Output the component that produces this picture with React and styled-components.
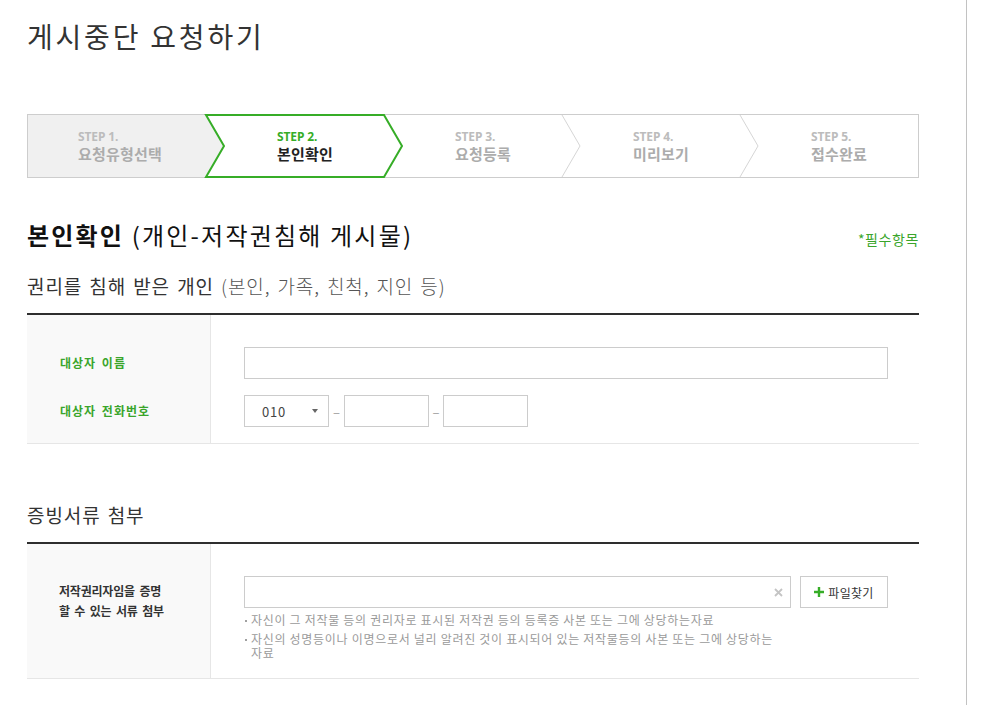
import React from "react";
import styled, { createGlobalStyle } from "styled-components";

const GREEN = "#36ad27";
const GREEN_TEXT = "#3aa52b";

const GlobalStyle = createGlobalStyle`
  html, body { margin: 0; padding: 0; background: #fff; }
  body {
    font-family: "Noto Sans CJK KR", "Noto Sans", sans-serif;
    color: #333;
    word-break: keep-all;
  }
  * { box-sizing: border-box; }
`;

const Page = styled.div`
  display: flex;
  min-height: 705px;
`;

const Main = styled.main`
  width: 967px;
  flex-shrink: 0;
  border-right: 1px solid #c2c2c2;
  padding: 19px 0 0 27px;
  min-height: 705px;
`;

const Side = styled.div`
  flex: 1;
  background: #fff;
`;

const Title = styled.h1`
  margin: 0;
  font-size: 28px;
  line-height: 34px;
  font-weight: 400;
  color: #333;
  letter-spacing: 2.8px;
`;

/* ---------- stepper ---------- */
const Stepper = styled.ol`
  display: flex;
  width: 892px;
  height: 64px;
  margin: 61px 0 0;
  padding: 0;
  list-style: none;
  border: 1px solid #cdcdcd;
  background: #fff;
`;

const Step = styled.li`
  position: relative;
  width: 178px;
  flex: ${(p) => (p.$last ? "1" : "none")};
  display: flex;
  flex-direction: column;
  justify-content: center;
  padding-left: ${(p) => p.$pl}px;
  padding-top: 1px;
`;

const Shape = styled.svg`
  position: absolute;
  left: 0;
  top: -1px;
  width: 198px;
  height: 64px;
  overflow: visible;
  pointer-events: none;
  z-index: 0;
`;

const StepNo = styled.span`
  position: relative;
  z-index: 1;
  font-family: "Noto Sans", "Liberation Sans", sans-serif;
  font-size: 12px;
  line-height: 15px;
  font-weight: 700;
  letter-spacing: -0.1px;
  color: ${(p) => (p.$active ? GREEN : "#bcbcbc")};
`;

const StepName = styled.span`
  position: relative;
  z-index: 1;
  font-size: 15px;
  line-height: 20px;
  font-weight: 700;
  letter-spacing: 0.2px;
  color: ${(p) => (p.$active ? "#222" : "#acacac")};
`;

const steps = [
  { no: "STEP 1.", name: "요청유형선택", state: "done" },
  { no: "STEP 2.", name: "본인확인", state: "active" },
  { no: "STEP 3.", name: "요청등록", state: "todo" },
  { no: "STEP 4.", name: "미리보기", state: "todo" },
  { no: "STEP 5.", name: "접수완료", state: "todo" },
];

function StepShape({ state, last }) {
  if (state === "done") {
    return (
      <Shape>
        <polygon points="0,1 178,1 196,32 178,63 0,63" fill="#f0f0f0" />
      </Shape>
    );
  }
  if (state === "active") {
    return (
      <Shape>
        <polygon
          points="0,1 178,1 196,32 178,63 0,63 18,32"
          fill="#fff"
          stroke={GREEN}
          strokeWidth="2"
          strokeLinejoin="miter"
        />
      </Shape>
    );
  }
  if (last) return null;
  return (
    <Shape>
      <polyline points="178,1 196,32 178,63" fill="none" stroke="#d6d6d6" strokeWidth="1" />
    </Shape>
  );
}

/* ---------- headings ---------- */
const HeadRow = styled.div`
  display: flex;
  justify-content: space-between;
  align-items: baseline;
  width: 892px;
  margin-top: 42px;
`;

const H2 = styled.h2`
  margin: 0;
  font-size: 24px;
  line-height: 30px;
  font-weight: 400;
  color: #111;
  letter-spacing: 2.2px;
`;

const Strong = styled.strong`
  font-weight: 700;
`;

const Required = styled.span`
  font-size: 14px;
  letter-spacing: 0.6px;
  color: ${GREEN_TEXT};
`;

const H3 = styled.h3`
  margin: ${(p) => p.$mt}px 0 15px;
  font-size: 19px;
  line-height: 24px;
  font-weight: 400;
  color: #333;
  letter-spacing: 0.9px;
  word-spacing: 2px;
`;

const Sub = styled.span`
  color: #555;
  font-weight: 300;
`;

/* ---------- form table ---------- */
const Table = styled.div`
  width: 892px;
  border-top: 2px solid #2e2e2e;
  border-bottom: 1px solid #e6e6e6;
`;

const Row = styled.div`
  display: grid;
  grid-template-columns: 184px 1fr;
`;

const LabelCell = styled.div`
  display: flex;
  align-items: center;
  background: #f9f9f9;
  border-right: 1px solid #e6e6e6;
  padding: ${(p) => p.$pt || 0}px 0 ${(p) => p.$pb || 0}px ${(p) => p.$pl || 33}px;
  font-size: 12px;
  line-height: 20px;
  font-weight: 700;
  letter-spacing: ${(p) => (p.$green ? "1px" : "-0.2px")};
  word-spacing: 2px;
  color: ${(p) => (p.$green ? GREEN_TEXT : "#333")};
`;

const FieldCell = styled.div`
  display: flex;
  flex-direction: ${(p) => (p.$column ? "column" : "row")};
  align-items: ${(p) => (p.$column ? "stretch" : "center")};
  padding: ${(p) => p.$pt}px 31px ${(p) => p.$pb}px 33px;
`;

const TextInput = styled.input`
  display: block;
  height: 32px;
  width: ${(p) => (p.$w ? `${p.$w}px` : "100%")};
  margin: 0;
  padding: 0 10px;
  border: 1px solid #cccccc;
  border-radius: 0;
  background: #fff;
  font: inherit;
  font-size: 13px;
  color: #333;
  outline: none;
`;

const SelectBox = styled.div`
  display: flex;
  align-items: center;
  justify-content: space-between;
  width: 85px;
  height: 32px;
  padding: 0 10px 0 17px;
  border: 1px solid #cccccc;
  font-size: 13px;
  color: #444;
  letter-spacing: 0.8px;
`;

const Caret = styled.span`
  width: 0;
  height: 0;
  border-left: 3px solid transparent;
  border-right: 3px solid transparent;
  border-top: 4px solid #666;
`;

const Dash = styled.span`
  width: ${(p) => p.$w || 15}px;
  text-align: center;
  font-size: 13px;
  color: #a0a0a0;
`;

const FileRow = styled.div`
  display: flex;
  gap: 9px;
`;

const FileBox = styled.div`
  display: flex;
  align-items: center;
  justify-content: flex-end;
  width: 547px;
  height: 32px;
  padding-right: 7px;
  border: 1px solid #cccccc;
`;

const FileButton = styled.button`
  display: flex;
  align-items: center;
  justify-content: center;
  gap: 4px;
  width: 88px;
  height: 32px;
  margin: 0;
  padding: 0;
  border: 1px solid #cccccc;
  background: #fff;
  font-family: inherit;
  font-size: 12px;
  letter-spacing: 0.3px;
  color: #333;
  cursor: pointer;
`;

const NoteList = styled.ul`
  width: 547px;
  margin: 5px 0 0;
  padding: 0;
  list-style: none;
`;

const Note = styled.li`
  display: flex;
  align-items: flex-start;
  margin-top: ${(p) => (p.$first ? 0 : 5)}px;
  font-size: 12px;
  line-height: 14px;
  color: #9a9a9a;
  letter-spacing: 0.7px;
  word-break: keep-all;
`;

const Bullet = styled.span`
  flex-shrink: 0;
  width: 2px;
  height: 2px;
  margin: 7px 4px 0 1px;
  background: #a0a0a0;
`;

const ClearIcon = () => (
  <svg width="9" height="9" viewBox="0 0 9 9" aria-hidden="true">
    <path d="M1 1 L8 8 M8 1 L1 8" stroke="#c4c4c4" strokeWidth="1.8" />
  </svg>
);

const PlusIcon = () => (
  <svg width="10" height="10" viewBox="0 0 10 10" aria-hidden="true">
    <path d="M5 0 V10 M0 5 H10" stroke={GREEN} strokeWidth="2.4" />
  </svg>
);

export default function App() {
  return (
    <>
      <GlobalStyle />
      <Page>
        <Main>
          <Title>게시중단 요청하기</Title>

          <Stepper>
            {steps.map((s, i) => (
              <Step key={s.no} $pl={i === 0 ? 50 : 71} $last={i === steps.length - 1}>
                <StepShape state={s.state} last={i === steps.length - 1} />
                <StepNo $active={s.state === "active"}>{s.no}</StepNo>
                <StepName $active={s.state === "active"}>{s.name}</StepName>
              </Step>
            ))}
          </Stepper>

          <HeadRow>
            <H2>
              <Strong>본인확인</Strong> (개인-저작권침해 게시물)
            </H2>
            <Required>*필수항목</Required>
          </HeadRow>

          <H3 $mt={24}>
            권리를 침해 받은 개인 <Sub>(본인, 가족, 친척, 지인 등)</Sub>
          </H3>

          <Table>
            <Row>
              <LabelCell $green $pt={32} $pb={8}>대상자 이름</LabelCell>
              <FieldCell $pt={32} $pb={8}>
                <TextInput type="text" aria-label="대상자 이름" />
              </FieldCell>
            </Row>
            <Row>
              <LabelCell $green $pt={8} $pb={16}>대상자 전화번호</LabelCell>
              <FieldCell $pt={8} $pb={16}>
                <SelectBox>
                  010
                  <Caret />
                </SelectBox>
                <Dash>–</Dash>
                <TextInput type="text" $w={85} aria-label="전화번호 가운데" />
                <Dash $w={14}>–</Dash>
                <TextInput type="text" $w={85} aria-label="전화번호 끝" />
              </FieldCell>
            </Row>
          </Table>

          <H3 $mt={59}>증빙서류 첨부</H3>

          <Table>
            <Row>
              <LabelCell $pl={32} $pb={20}>
                <span>
                  저작권리자임을 증명
                  <br />
                  할 수 있는 서류 첨부
                </span>
              </LabelCell>
              <FieldCell $column $pt={32} $pb={18}>
                <FileRow>
                  <FileBox>
                    <ClearIcon />
                  </FileBox>
                  <FileButton type="button">
                    <PlusIcon />
                    파일찾기
                  </FileButton>
                </FileRow>
                <NoteList>
                  <Note $first>
                    <Bullet />
                    <span>자신이 그 저작물 등의 권리자로 표시된 저작권 등의 등록증 사본 또는 그에 상당하는자료</span>
                  </Note>
                  <Note>
                    <Bullet />
                    <span>자신의 성명등이나 이명으로서 널리 알려진 것이 표시되어 있는 저작물등의 사본 또는 그에 상당하는 자료</span>
                  </Note>
                </NoteList>
              </FieldCell>
            </Row>
          </Table>
        </Main>
        <Side />
      </Page>
    </>
  );
}
